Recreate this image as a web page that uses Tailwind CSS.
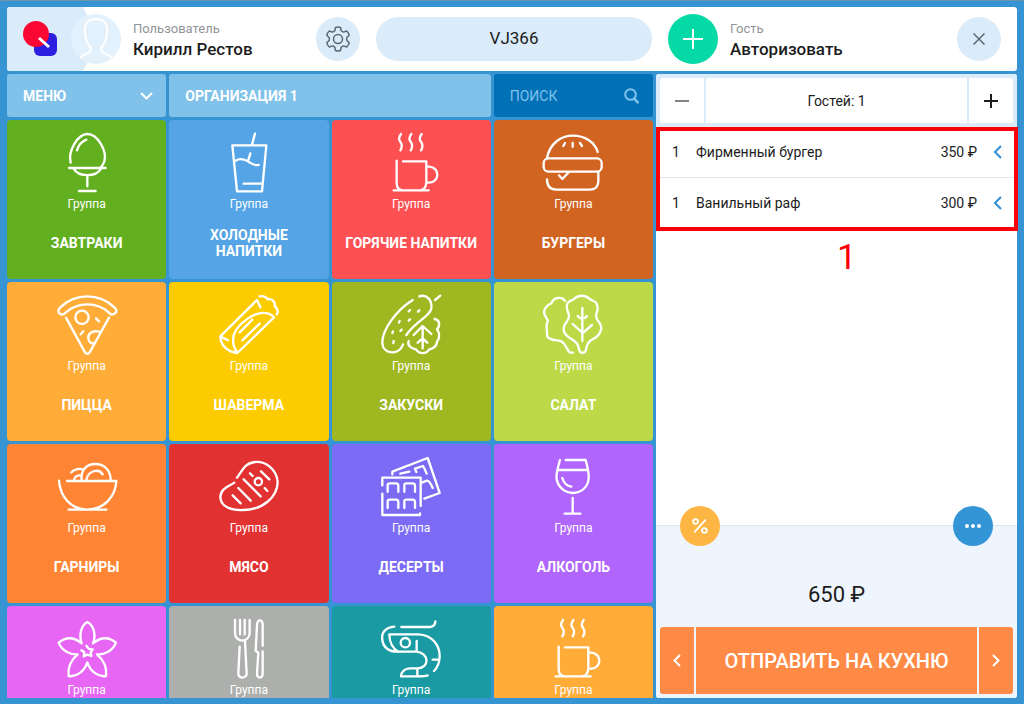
<!DOCTYPE html>
<html lang="ru">
<head>
<meta charset="utf-8">
<meta name="viewport" content="width=device-width, initial-scale=1">
<title>Заказ VJ366</title>
<script src="https://cdn.jsdelivr.net/npm/@tailwindcss/browser@4"></script>
</head>
<body class="flex h-screen flex-col gap-[3px] overflow-hidden border-t border-[#6d93ad] bg-[#3694d3] px-[7px] pt-[6px] pb-[6px] font-['Roboto',sans-serif] text-[#1c1c1c]">

<header class="flex h-16 shrink-0 overflow-hidden rounded-[3px] bg-white">
  <div class="flex flex-1 items-center">
    <div class="relative flex h-16 w-[114px] shrink-0 items-center justify-between">
      <svg class="absolute inset-0" width="92" height="64" viewBox="0 0 92 64" aria-hidden="true"><path d="M0 0H76L92 32L76 64H0Z" fill="#daebf9"/></svg>
      <svg class="relative ml-4" width="36" height="36" viewBox="0 0 36 36" aria-hidden="true">
        <rect x="11" y="12" width="23" height="23" rx="6" fill="#2d1fe0"/>
        <circle cx="13" cy="13" r="13" fill="#fb0733"/>
        <path d="M16 17L26 26" stroke="#fff" stroke-width="3"/>
      </svg>
      <svg class="relative" width="50" height="50" viewBox="0 0 50 50" aria-hidden="true">
        <circle cx="25" cy="25" r="25" fill="#e3f1fc"/>
        <path d="M9 44C13 39 20 40 20 34C15 29 14 24 14 18C13 9 18 5 25 5S37 9 36 18C36 24 35 29 30 34C30 40 37 39 41 44" fill="none" stroke="#fff" stroke-width="2"/>
      </svg>
    </div>
    <div class="ml-3 min-w-0 flex-1">
      <div class="text-[13px] leading-5 text-[#8f9599]">Пользователь</div>
      <div class="text-[17px] leading-5 font-medium">Кирилл Рестов</div>
    </div>
    <button class="mr-4 flex size-11 items-center justify-center rounded-full bg-[#daebf9]" aria-label="Настройки">
      <svg width="26" height="26" viewBox="0 0 26 26" fill="none" stroke="#5d6870" stroke-width="1.5" stroke-linejoin="round" aria-hidden="true">
        <circle cx="13" cy="13" r="4.5"/>
        <path d="M10.500 1.500Q13 .5 15.500 1.500L16.200 4.800L18.500 6.100L21.700 5Q23.700 6.700 24.200 9.300L21.700 11.700V14.300L24.200 16.700Q23.700 19.300 21.700 21L18.500 19.900L16.200 21.200L15.500 24.500Q13 25.500 10.500 24.500L9.800 21.200L7.500 19.900L4.300 21Q2.300 19.300 1.800 16.700L4.300 14.300V11.700L1.800 9.300Q2.300 6.700 4.300 5L7.500 6.100L9.800 4.800Z"/>
      </svg>
    </button>
    <button class="h-11 w-[276px] rounded-full bg-[#daebf9] text-[17px]">VJ366</button>
  </div>
  <div class="flex w-[365px] shrink-0 items-center px-4">
    <button class="flex size-[50px] items-center justify-center rounded-full bg-[#05d9a5]" aria-label="Добавить гостя">
      <svg width="20" height="20" viewBox="0 0 20 20" stroke="#fff" stroke-width="2" aria-hidden="true"><path d="M10 0V20M0 10H20"/></svg>
    </button>
    <div class="ml-3 flex-1">
      <div class="text-[13px] leading-5 text-[#8f9599]">Гость</div>
      <div class="text-[17px] leading-5 font-medium">Авторизовать</div>
    </div>
    <button class="flex size-11 items-center justify-center rounded-full bg-[#daebf9]" aria-label="Закрыть">
      <svg width="12" height="12" viewBox="0 0 12 12" stroke="#5d6870" stroke-width="1.500" aria-hidden="true"><path d="M.5 .5L11.500 11.500M11.500 .5L.5 11.500"/></svg>
    </button>
  </div>
</header>

<div class="flex min-h-0 flex-1 gap-[3px]">
  <main class="flex min-w-0 flex-1 flex-col gap-[3px] overflow-hidden">
    <div class="grid h-[43px] shrink-0 grid-cols-4 gap-[3px] text-sm">
      <button class="flex items-center justify-between rounded-[3px] bg-[#80c2ea] pr-[13px] pl-4 font-bold text-white">МЕНЮ
        <svg width="13" height="8" viewBox="0 0 13 8" fill="none" stroke="#fff" stroke-width="2" aria-hidden="true"><path d="M1 1L6.500 6.500L12 1"/></svg>
      </button>
      <button class="col-span-2 rounded-[3px] bg-[#80c2ea] px-4 text-left font-bold text-white">ОРГАНИЗАЦИЯ 1</button>
      <label class="flex items-center rounded-[3px] bg-[#0070b7] pr-[14px] pl-4">
        <input type="search" aria-label="Поиск" placeholder="ПОИСК" class="w-full min-w-0 flex-1 bg-transparent text-white outline-none placeholder:text-[#80c2ea]">
        <svg class="shrink-0" width="15" height="16" viewBox="0 0 15 16" fill="none" stroke="#80c2ea" stroke-width="2" aria-hidden="true"><circle cx="6.500" cy="6.500" r="5.300"/><path d="M10 10.500L14.500 15" stroke-width="2.500"/></svg>
      </label>
    </div>

    <div class="grid min-h-0 flex-1 auto-rows-[159px] grid-cols-4 gap-[3px] overflow-hidden text-white [&_button]:flex [&_button]:flex-col [&_button]:items-center [&_button]:justify-start [&_button]:rounded-[4px] [&_button]:pt-[13px] [&_b]:flex [&_b]:h-14 [&_b]:items-center [&_b]:text-sm [&_b]:leading-4 [&_b]:font-bold [&_span]:text-xs [&_span]:leading-[22px] [&_svg]:size-[60px] [&_svg]:shrink-0 [&_svg]:overflow-visible [&_svg]:fill-none [&_svg]:stroke-white [&_svg]:stroke-[7px]">
      <button class="bg-[#62af20]">
        <svg viewBox="170 45 180 180" stroke-linecap="round" stroke-linejoin="round" aria-hidden="true"><path d="M211 134C202 100 232 48 261 48C292 48 321 100 312 130C308 142 303 147 298 151M206 150H316M220 152C235 178 287 178 302 152M261 173V205M236 219H286M230 97C234 82 246 70 258 65"/></svg>
        <span>Группа</span><b>ЗАВТРАКИ</b></button>
      <button class="bg-[#54a4e6]">
        <svg viewBox="657 45 180 180" stroke-linecap="round" stroke-linejoin="round" aria-hidden="true"><path d="M765 47L756 80M697 82H799L786 220H711ZM707 128C722 118 738 126 750 134C760 141 770 142 776 141M751 106L745 126M731 197H784"/></svg>
        <span>Группа</span><b>ХОЛОДНЫЕ<br>НАПИТКИ</b></button>
      <button class="bg-[#fd5053]">
        <svg viewBox="153 45 180 180" stroke-linecap="round" stroke-linejoin="round" aria-hidden="true"><path d="M213 48C203 62 208 67 212 73S217 87 211 97M244 48C234 62 239 67 243 73S248 87 242 97M275 48C265 62 270 67 274 73S279 87 273 97M200 128V195Q200 213 214 216M219 130H289V192Q288 213 274 216M191 217H296M289 146H298C330 148 330 192 298 194H289"/></svg>
        <span>Группа</span><b>ГОРЯЧИЕ НАПИТКИ</b></button>
      <button class="bg-[#d16421]">
        <svg viewBox="640 45 180 180" stroke-linecap="round" stroke-linejoin="round" aria-hidden="true"><path d="M652 121C660 75 695 53 730 53C765 53 795 72 804 102M652 184C652 205 662 215 680 215H780C797 215 806 205 806 190V162M688 172L698 183L718 162M706 75L701 84M729 75V86M751 75L757 84"/><rect x="642" y="121" width="174" height="40" rx="14"/></svg>
        <span>Группа</span><b>БУРГЕРЫ</b></button>

      <button class="bg-[#ffad38]">
        <svg viewBox="170 45 180 180" stroke-linecap="round" stroke-linejoin="round" aria-hidden="true"><path d="M178 101C172 96 173 89 180 82C225 38 297 38 342 82C350 90 350 96 344 100C337 105 330 103 326 98C290 65 232 65 196 98C190 104 183 105 178 101ZM197 113L254 217Q261 226 268 217L326 113M297 155C275 150 262 162 264 175C266 190 277 192 283 188M287 115L296 124M249 154L241 163"/><circle cx="245" cy="112" r="20"/></svg>
        <span>Группа</span><b>ПИЦЦА</b></button>
      <button class="bg-[#fdcc00]">
        <svg viewBox="657 45 180 180" stroke-linecap="round" stroke-linejoin="round" aria-hidden="true"><path d="M781 82L771 60L661 169C662 195 680 215 712 219L822 112C800 88 765 100 740 118C705 143 692 172 703 202L712 219M663 170L684 181M779 49C790 46 800 52 803 58C815 55 827 65 824 78C832 85 836 95 830 103M719 157L757 119M727 181L779 131"/></svg>
        <span>Группа</span><b>ШАВЕРМА</b></button>
      <button class="bg-[#9fb822]">
        <svg viewBox="153 45 180 180" stroke-linecap="round" stroke-linejoin="round" aria-hidden="true"><path d="M248 60C200 90 155 150 157 190C160 224 208 227 219 193M268 49C290 42 307 60 304 85C300 110 255 125 229 165M331 47L315 60M240 90L236 94M268 91L264 95M240 118L236 122M209 123L207 128M215 149L211 153M189 154L187 159M191 183L190 189M314 117C330 120 331 138 321 148C331 160 328 178 321 184C322 200 305 207 298 208C288 223 268 223 258 208C240 205 232 195 236 183M278 205V140M251 165L278 138L304 162M263 188L278 175L292 188"/></svg>
        <span>Группа</span><b>ЗАКУСКИ</b></button>
      <button class="bg-[#bdd948]">
        <svg viewBox="640 45 180 180" stroke-linecap="round" stroke-linejoin="round" aria-hidden="true"><path d="M706 62C695 48 672 52 665 70C650 75 640 90 644 102C648 112 653 118 655 122C645 140 655 155 652 168C657 182 685 180 695 184C712 195 712 211 720 217L730 218M712 75C712 62 728 62 733 57C745 44 768 44 780 57C790 65 803 62 803 80C808 90 797 100 800 110C800 125 815 125 815 145C812 165 800 172 785 180C770 190 772 200 768 212C765 221 752 221 749 212C745 195 745 190 730 180C712 170 700 160 702 145C702 130 718 125 718 108C718 95 708 90 712 75ZM758 84V183M729 132L758 158M787 135L758 160M744 108L753 115M772 108L765 114"/></svg>
        <span>Группа</span><b>САЛАТ</b></button>

      <button class="bg-[#ff8534]">
        <svg viewBox="170 45 180 180" stroke-linecap="round" stroke-linejoin="round" aria-hidden="true"><path d="M176 116C180 165 210 201 261 203C312 201 345 165 348 117H200M205 203H318M244 116C240 85 258 66 285 66C312 66 332 85 331 116M258 116C262 85 295 78 307 97M213 91C222 79 240 79 250 84M220 116C222 104 232 98 243 101"/></svg>
        <span>Группа</span><b>ГАРНИРЫ</b></button>
      <button class="bg-[#e13131]">
        <svg viewBox="657 45 180 180" stroke-linecap="round" stroke-linejoin="round" aria-hidden="true"><path d="M703 122C690 132 662 138 661 165C662 195 695 206 730 204C790 203 832 165 833 120C830 80 795 57 765 60C733 63 725 90 711 107M698 160L722 184M715 138L752 176M731 112L782 163M783 88L808 112M750 94L758 102M794 138L802 147"/><circle cx="775" cy="119" r="11"/></svg>
        <span>Группа</span><b>МЯСО</b></button>
      <button class="bg-[#7b6bf5]">
        <svg viewBox="153 45 180 180" stroke-linecap="round" stroke-linejoin="round" aria-hidden="true"><path d="M157 130V107H272V192M157 155V219H270V214M187 97V89L293 48L329 153L283 170M173 149V128Q173 124 180 124H198Q205 124 205 131V149M223 149V128Q223 124 230 124H248Q255 124 255 131V149M173 198V177Q173 173 180 173H198Q205 173 205 180V198M223 198V177Q223 173 230 173H248Q255 173 255 180V198M211 95L238 89M259 90L255 80L279 72Q284 80 290 95M275 122L291 116Q299 116 308 138"/></svg>
        <span>Группа</span><b>ДЕСЕРТЫ</b></button>
      <button class="bg-[#b065fd]">
        <svg viewBox="640 45 180 180" stroke-linecap="round" stroke-linejoin="round" aria-hidden="true"><path d="M691 54C682 85 678 100 681 112C686 138 708 153 730 153C755 152 776 135 777 108C778 90 773 72 768 54H708M687 84H773M698 108C702 122 712 132 725 134M729 168V213M705 215H752"/></svg>
        <span>Группа</span><b>АЛКОГОЛЬ</b></button>

      <button class="bg-[#e766f3]">
        <svg viewBox="170 57 180 180" stroke-linecap="round" stroke-linejoin="round" aria-hidden="true"><path d="M244 130C234 100 245 75 261 66C278 75 289 100 278 130C300 112 325 110 347 128C338 152 312 165 290 163C310 180 320 205 317 228C295 232 270 215 261 187C252 215 227 232 205 228C202 205 212 180 232 163C210 165 184 152 175 128C197 110 222 112 244 130M258 137L266 147L277 148L271 157L273 168L261 164L250 169L252 157L243 151"/></svg>
        <span>Группа</span></button>
      <button class="bg-[#adafac]">
        <svg viewBox="657 57 180 180" stroke-linecap="round" stroke-linejoin="round" aria-hidden="true"><path d="M705 60V98C705 114 717 122 727 122C738 122 749 113 749 98V60M720 60V103M734 60V103M719 140L715 220C716 237 740 237 740 220L735 124M788 137V72C786 56 772 58 771 76L767 152L775 159L771 220C771 237 788 237 788 220V154"/></svg>
        <span>Группа</span></button>
      <button class="bg-[#1a9aa3]">
        <svg viewBox="153 57 180 180" stroke-linecap="round" stroke-linejoin="round" aria-hidden="true"><path d="M193 80C165 82 153 100 157 120C160 145 180 155 200 155H260C299 159 299 205 262 205H240C225 206 214 215 213 229H262V208M262 229C275 229 285 229 293 226M214 81H300C312 80 316 72 316 64M205 155C190 147 178 128 178 103H265C310 105 330 140 329 170C328 190 320 205 312 213M260 123V153M308 179H326"/><circle cx="226" cy="128" r="14"/></svg>
        <span>Группа</span></button>
      <button class="bg-[#ffad38]">
        <svg viewBox="153 45 180 180" stroke-linecap="round" stroke-linejoin="round" aria-hidden="true"><path d="M213 48C203 62 208 67 212 73S217 87 211 97M244 48C234 62 239 67 243 73S248 87 242 97M275 48C265 62 270 67 274 73S279 87 273 97M200 128V195Q200 213 214 216M219 130H289V192Q288 213 274 216M191 217H296M289 146H298C330 148 330 192 298 194H289"/></svg>
        <span>Группа</span></button>
    </div>
  </main>

  <aside class="relative flex w-[361px] shrink-0 flex-col rounded-[3px] bg-white">
    <div class="flex gap-[2px] rounded-t-[3px] bg-[#daebf9] p-1 text-sm">
      <button class="flex h-[45px] w-11 items-center justify-center rounded-l-[3px] bg-white" aria-label="Меньше гостей">
        <svg width="14" height="14" viewBox="0 0 14 14" stroke="#858585" stroke-width="2" aria-hidden="true"><path d="M0 7H14"/></svg>
      </button>
      <div class="flex flex-1 items-center justify-center bg-white">Гостей: 1</div>
      <button class="flex h-[45px] w-11 items-center justify-center rounded-r-[3px] bg-white" aria-label="Больше гостей">
        <svg width="14" height="14" viewBox="0 0 14 14" stroke="#1c1c1c" stroke-width="2" aria-hidden="true"><path d="M0 7H14M7 0V14"/></svg>
      </button>
    </div>

    <div class="relative flex-1">
      <ul class="text-sm">
        <li class="flex h-[51px] items-center border-b border-[#dbe6ef] pr-[15px] pb-px pl-4">
          <span class="w-6">1</span><span class="flex-1">Фирменный бургер</span><span>350 ₽</span>
          <button class="ml-4" aria-label="Действия: Фирменный бургер"><svg width="9" height="14" viewBox="0 0 9 14" fill="none" stroke="#2f8fd2" stroke-width="2" aria-hidden="true"><path d="M8 1L2 7L8 13"/></svg></button>
        </li>
        <li class="flex h-[50px] items-center pr-[15px] pb-px pl-4">
          <span class="w-6">1</span><span class="flex-1">Ванильный раф</span><span>300 ₽</span>
          <button class="ml-4" aria-label="Действия: Ванильный раф"><svg width="9" height="14" viewBox="0 0 9 14" fill="none" stroke="#2f8fd2" stroke-width="2" aria-hidden="true"><path d="M8 1L2 7L8 13"/></svg></button>
        </li>
      </ul>
      <!-- callout around the ordered dishes -->
      <div class="pointer-events-none absolute top-0 -right-px left-0 h-[104px] border-4 border-[#fb0007]"></div>
      <div class="absolute top-[111px] left-[181px] text-[35px] leading-10 text-[#fb0007]">1</div>
    </div>

    <div class="relative flex h-[173px] flex-col rounded-b-[3px] border-t border-[#d9e8f4] bg-[#eef5fc] px-1 pb-1">
      <div class="absolute inset-x-6 -top-5 flex justify-between">
        <button class="flex size-10 items-center justify-center rounded-full bg-[#fdb544]" aria-label="Скидка">
          <svg width="16" height="16" viewBox="0 0 18 18" fill="none" stroke="#fff" stroke-width="2" stroke-linecap="round" aria-hidden="true"><path d="M15 2.500L3 15.500"/><circle cx="4" cy="4" r="2.700"/><circle cx="14" cy="14" r="2.700"/></svg>
        </button>
        <button class="flex size-10 items-center justify-center rounded-full bg-[#3394d6]" aria-label="Ещё">
          <svg width="16" height="4" viewBox="0 0 16 4" fill="#fff" aria-hidden="true"><circle cx="2" cy="2" r="2"/><circle cx="8" cy="2" r="2"/><circle cx="14" cy="2" r="2"/></svg>
        </button>
      </div>
      <div class="mt-auto pb-[17px] text-center text-[22px] leading-[30px]">650 ₽</div>
      <div class="flex h-[67px] gap-[2px] text-white">
        <button class="flex w-[34px] items-center justify-center rounded-l-[3px] bg-[#ff8a45]" aria-label="Назад"><svg width="8" height="13" viewBox="0 0 8 13" fill="none" stroke="#fff" stroke-width="2" aria-hidden="true"><path d="M7 1L1.500 6.500L7 12"/></svg></button>
        <button class="flex-1 bg-[#ff8a45] text-xl font-medium">ОТПРАВИТЬ НА КУХНЮ</button>
        <button class="flex w-[34px] items-center justify-center rounded-r-[3px] bg-[#ff8a45]" aria-label="Вперёд"><svg width="8" height="13" viewBox="0 0 8 13" fill="none" stroke="#fff" stroke-width="2" aria-hidden="true"><path d="M1 1L6.500 6.500L1 12"/></svg></button>
      </div>
    </div>
  </aside>
</div>
</body>
</html>
